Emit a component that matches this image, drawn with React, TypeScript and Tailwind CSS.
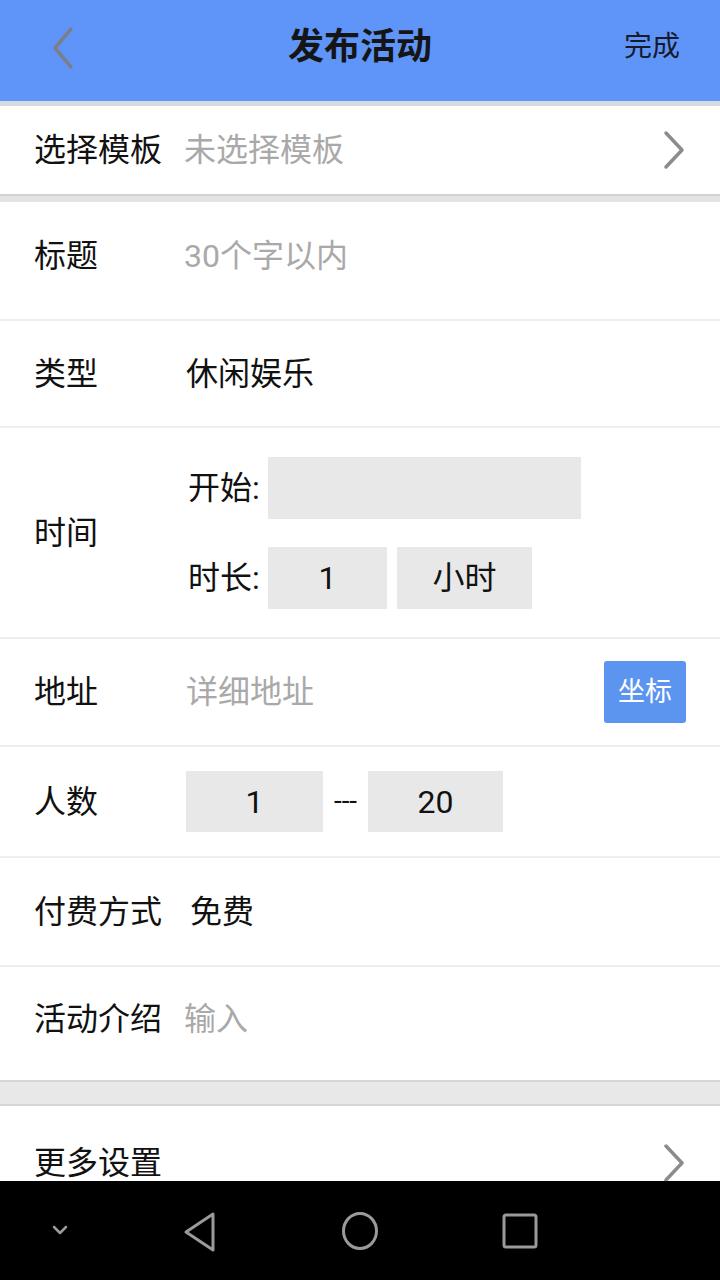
import React from "react";

const font = { fontFamily: '"Roboto", "Noto Sans CJK SC", sans-serif' };

function Divider() {
  return <div className="h-[2px] shrink-0 bg-[#eeeeee]" />;
}

function Chevron({ className }: { className?: string }) {
  return (
    <svg className={className} width="24" height="40" viewBox="0 0 24 40" fill="none">
      <path d="M4 3 L20 20 L4 37" stroke="#8c8c8c" strokeWidth="3.5" strokeLinecap="round" strokeLinejoin="round" />
    </svg>
  );
}

export default function App() {
  return (
    <div className="w-[720px] h-[1280px] flex flex-col overflow-hidden bg-white text-[#111111]" style={font}>
      <div className="flex-1 overflow-hidden flex flex-col">
        {/* Header */}
        <div className="h-[101px] shrink-0 bg-[#5f95f8] flex items-center justify-between px-[50px] pr-[40px] relative">
          <svg width="26" height="44" viewBox="0 0 26 44" fill="none" className="mb-[6px]">
            <path d="M21 3 L5 22 L21 41" stroke="#7a7f88" strokeWidth="3.5" strokeLinecap="round" strokeLinejoin="round" />
          </svg>
          <div className="absolute left-0 right-0 text-center text-[36px] font-bold text-[#151515] pointer-events-none pb-[8px]">发布活动</div>
          <div className="text-[28px] text-[#161a2a] pb-[8px]">完成</div>
        </div>
        <div className="h-[5px] shrink-0 bg-[#d7dade]" />

        {/* Template row */}
        <div className="h-[88px] shrink-0 flex items-center pl-[34px] pr-[34px]">
          <div className="text-[32px] w-[150px]">选择模板</div>
          <div className="text-[32px] text-[#a9a9a9] flex-1">未选择模板</div>
          <Chevron />
        </div>
        <div className="h-[8px] shrink-0 bg-[#e3e3e3] border-t-[2px] border-[#d2d2d2]" />

        {/* 标题 */}
        <div className="h-[117px] shrink-0 flex items-center pl-[34px] pb-[10px]">
          <div className="text-[32px] w-[150px]">标题</div>
          <div className="text-[32px] text-[#a9a9a9]">30个字以内</div>
        </div>
        <Divider />

        {/* 类型 */}
        <div className="h-[105px] shrink-0 flex items-center pl-[34px]">
          <div className="text-[32px] w-[152px]">类型</div>
          <div className="text-[32px]">休闲娱乐</div>
        </div>
        <Divider />

        {/* 时间 */}
        <div className="h-[209px] shrink-0 flex items-center pl-[34px]">
          <div className="text-[32px] w-[154px]">时间</div>
          <div className="flex flex-col gap-[28px]">
            <div className="flex items-center">
              <div className="text-[32px] w-[80px]">开始:</div>
              <div className="w-[313px] h-[62px] bg-[#e8e8e8]" />
            </div>
            <div className="flex items-center">
              <div className="text-[32px] w-[80px]">时长:</div>
              <div className="w-[119px] h-[62px] bg-[#e8e8e8] flex items-center justify-center text-[32px]">1</div>
              <div className="w-[135px] h-[62px] bg-[#e8e8e8] flex items-center justify-center text-[32px] ml-[10px]">小时</div>
            </div>
          </div>
        </div>
        <Divider />

        {/* 地址 */}
        <div className="h-[106px] shrink-0 flex items-center pl-[34px] pr-[34px]">
          <div className="text-[32px] w-[152px]">地址</div>
          <div className="text-[32px] text-[#a9a9a9] flex-1">详细地址</div>
          <div className="w-[82px] h-[62px] bg-[#5b95f0] rounded-[3px] flex items-center justify-center text-white text-[27px]">坐标</div>
        </div>
        <Divider />

        {/* 人数 */}
        <div className="h-[109px] shrink-0 flex items-center pl-[34px]">
          <div className="text-[32px] w-[152px]">人数</div>
          <div className="w-[137px] h-[61px] bg-[#e8e8e8] flex items-center justify-center text-[32px]">1</div>
          <div className="w-[45px] text-center text-[28px] leading-none pb-[2px]">---</div>
          <div className="w-[135px] h-[61px] bg-[#e8e8e8] flex items-center justify-center text-[32px]">20</div>
        </div>
        <Divider />

        {/* 付费方式 */}
        <div className="h-[107px] shrink-0 flex items-center pl-[34px]">
          <div className="text-[32px] w-[156px]">付费方式</div>
          <div className="text-[32px]">免费</div>
        </div>
        <Divider />

        {/* 活动介绍 */}
        <div className="h-[113px] shrink-0 flex items-center pl-[34px] pb-[10px]">
          <div className="text-[32px] w-[150px]">活动介绍</div>
          <div className="text-[32px] text-[#a9a9a9]">输入</div>
        </div>

        <div className="h-[26px] shrink-0 bg-[#e8e8e8] border-t-[2px] border-b-[2px] border-[#d6d6d6]" />

        {/* 更多设置 */}
        <div className="h-[114px] shrink-0 flex items-center pl-[34px] pr-[34px]">
          <div className="text-[32px] flex-1">更多设置</div>
          <Chevron />
        </div>
      </div>

      {/* Nav bar */}
      <div className="h-[99px] shrink-0 bg-black flex items-center relative">
        <svg className="absolute left-[52px] top-[44px]" width="16" height="10" viewBox="0 0 16 10" fill="none">
          <path d="M2 2 L8 8 L14 2" stroke="#9a9a9a" strokeWidth="2.5" strokeLinecap="round" strokeLinejoin="round" />
        </svg>
        <svg className="absolute left-[182px] top-[30px]" width="36" height="42" viewBox="0 0 36 42" fill="none">
          <path d="M31 3 L31 39 L4 21 Z" stroke="#9a9a9a" strokeWidth="3" strokeLinejoin="round" />
        </svg>
        <svg className="absolute left-[341px] top-[30px]" width="38" height="40" viewBox="0 0 38 40" fill="none">
          <ellipse cx="19" cy="20" rx="16.5" ry="17.5" stroke="#9a9a9a" strokeWidth="3" />
        </svg>
        <svg className="absolute left-[502px] top-[32px]" width="36" height="36" viewBox="0 0 36 36" fill="none">
          <rect x="2" y="2" width="32" height="32" rx="2" stroke="#9a9a9a" strokeWidth="3" />
        </svg>
      </div>
    </div>
  );
}
